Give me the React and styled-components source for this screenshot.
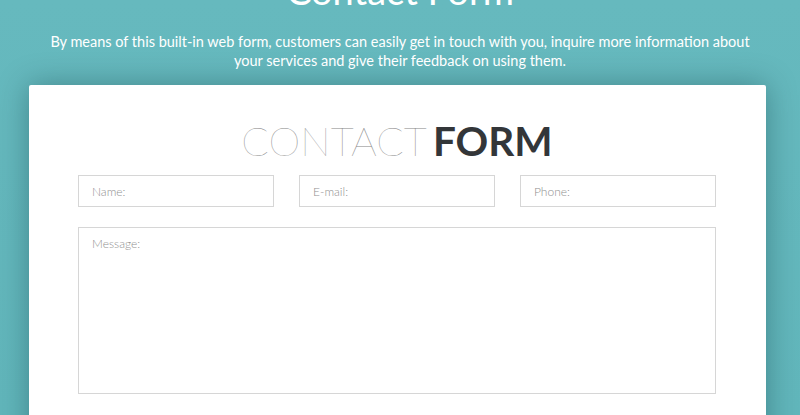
import React from "react";
import styled, { createGlobalStyle } from "styled-components";

const Global = createGlobalStyle`
  html, body {
    margin: 0;
    padding: 0;
    background: #63b8bd;
    overflow: hidden;
  }
  * {
    box-sizing: border-box;
  }
`;

const Page = styled.div`
  width: 800px;
  height: 415px;
  overflow: hidden;
  background: linear-gradient(180deg, #66b9be 0%, #61b6bb 100%);
`;

const Heading = styled.h1`
  margin: -34px 0 0 0;
  text-align: center;
  font-family: Lato, "Liberation Sans", sans-serif;
  font-weight: 400;
  font-size: 38px;
  line-height: 48px;
  color: #fff;
`;

const Lead = styled.p`
  margin: 18px auto 0;
  width: 720px;
  text-align: center;
  font-family: Lato, "Liberation Sans", sans-serif;
  font-size: 14.5px;
  line-height: 19px;
  color: #fff;
`;

const Card = styled.div`
  margin: 15px 0 0 29px;
  width: 737px;
  height: 400px;
  background: #fff;
  border-radius: 2px;
  box-shadow: 0 0 30px rgba(0, 40, 45, 0.35);
  padding: 32px 50px 0 49px;
`;

const Title = styled.h2`
  margin: 0 0 10px;
  text-align: center;
  font-family: Lato, "Liberation Sans", sans-serif;
  font-size: 40.5px;
  line-height: 48px;
  color: #333639;
`;

const Thin = styled.span`
  font-weight: 100;
  color: #858585;
`;

const Bold = styled.span`
  font-weight: 700;
  margin-left: 6px;
`;

const Row = styled.div`
  display: grid;
  grid-template-columns: repeat(3, 1fr);
  gap: 25px;
`;

const Field = styled.input`
  width: 100%;
  height: 32px;
  border: 1px solid #d6d6d6;
  border-radius: 0;
  padding: 0 13px;
  font-family: Lato, "Liberation Sans", sans-serif;
  font-weight: 300;
  font-size: 12px;
  color: #555;
  outline: none;
  &::placeholder {
    color: #8f8f8f;
  }
`;

const Message = styled.textarea`
  display: block;
  margin-top: 20px;
  width: 100%;
  height: 167px;
  border: 1px solid #d6d6d6;
  padding: 8px 13px;
  resize: none;
  font-family: Lato, "Liberation Sans", sans-serif;
  font-weight: 300;
  font-size: 12px;
  color: #555;
  outline: none;
  &::placeholder {
    color: #8f8f8f;
  }
`;

export default function App() {
  return (
    <Page>
      <Global />
      <Heading>Contact Form</Heading>
      <Lead>
        By means of this built-in web form, customers can easily get in touch
        with you, inquire more information about your services and give their
        feedback on using them.
      </Lead>
      <Card>
        <Title>
          <Thin>CONTACT</Thin>
          <Bold>FORM</Bold>
        </Title>
        <Row>
          <Field placeholder="Name:" />
          <Field placeholder="E-mail:" />
          <Field placeholder="Phone:" />
        </Row>
        <Message placeholder="Message:" />
      </Card>
    </Page>
  );
}
